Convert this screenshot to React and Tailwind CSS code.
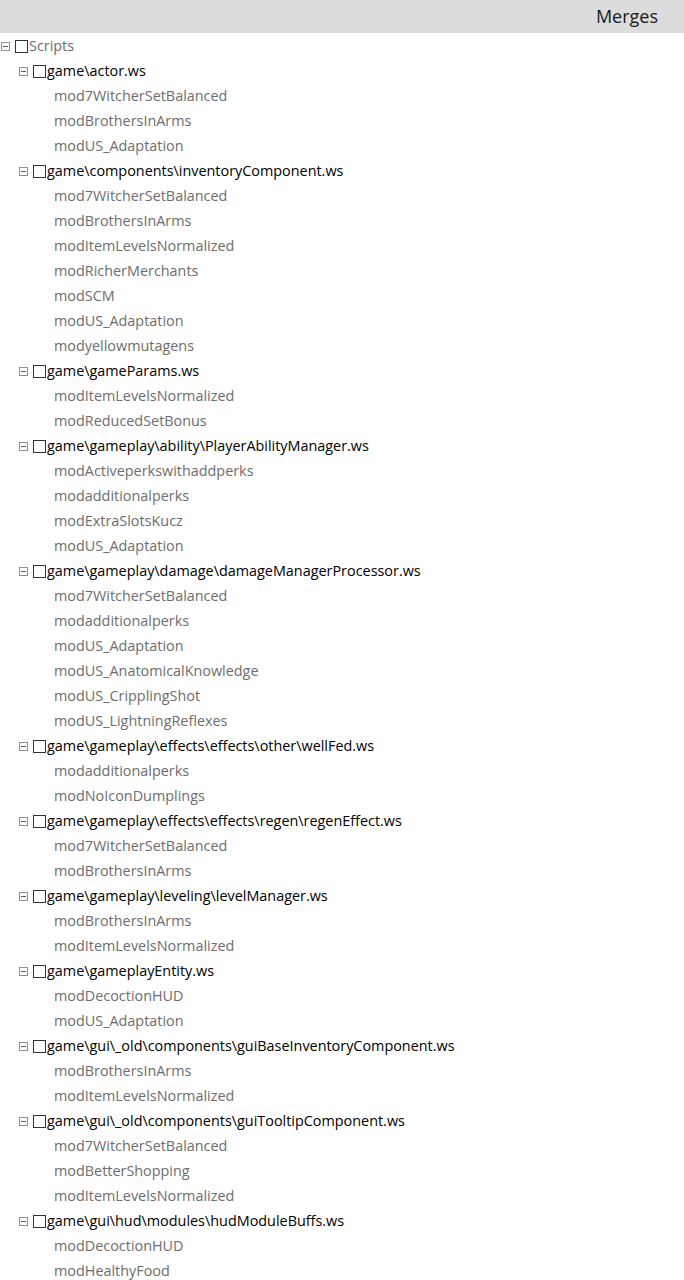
const tree = [
  { path: 'game\\actor.ws', mods: ['mod7WitcherSetBalanced', 'modBrothersInArms', 'modUS_Adaptation'] },
  {
    path: 'game\\components\\inventoryComponent.ws',
    mods: ['mod7WitcherSetBalanced', 'modBrothersInArms', 'modItemLevelsNormalized', 'modRicherMerchants', 'modSCM', 'modUS_Adaptation', 'modyellowmutagens'],
  },
  { path: 'game\\gameParams.ws', mods: ['modItemLevelsNormalized', 'modReducedSetBonus'] },
  {
    path: 'game\\gameplay\\ability\\PlayerAbilityManager.ws',
    mods: ['modActiveperkswithaddperks', 'modadditionalperks', 'modExtraSlotsKucz', 'modUS_Adaptation'],
  },
  {
    path: 'game\\gameplay\\damage\\damageManagerProcessor.ws',
    mods: ['mod7WitcherSetBalanced', 'modadditionalperks', 'modUS_Adaptation', 'modUS_AnatomicalKnowledge', 'modUS_CripplingShot', 'modUS_LightningReflexes'],
  },
  { path: 'game\\gameplay\\effects\\effects\\other\\wellFed.ws', mods: ['modadditionalperks', 'modNoIconDumplings'] },
  { path: 'game\\gameplay\\effects\\effects\\regen\\regenEffect.ws', mods: ['mod7WitcherSetBalanced', 'modBrothersInArms'] },
  { path: 'game\\gameplay\\leveling\\levelManager.ws', mods: ['modBrothersInArms', 'modItemLevelsNormalized'] },
  { path: 'game\\gameplayEntity.ws', mods: ['modDecoctionHUD', 'modUS_Adaptation'] },
  { path: 'game\\gui\\_old\\components\\guiBaseInventoryComponent.ws', mods: ['modBrothersInArms', 'modItemLevelsNormalized'] },
  { path: 'game\\gui\\_old\\components\\guiTooltipComponent.ws', mods: ['mod7WitcherSetBalanced', 'modBetterShopping', 'modItemLevelsNormalized'] },
  { path: 'game\\gui\\hud\\modules\\hudModuleBuffs.ws', mods: ['modDecoctionHUD', 'modHealthyFood'] },
];

const Expander = () => (
  <span className="flex h-[9px] w-[9px] shrink-0 items-center justify-center border border-[#919191] bg-white">
    <span className="block h-px w-[5px] bg-[#5a5a5a]" />
  </span>
);

const Checkbox = () => <span className="ml-[5px] block h-[13px] w-[13px] shrink-0 border border-[#333] bg-white" />;

const NodeRow = ({ label, className }) => (
  <div className="flex h-[25px] items-center">
    <Expander />
    <Checkbox />
    <span className={`ml-[1px] whitespace-nowrap ${className}`}>{label}</span>
  </div>
);

const App = () => {
  return (
    <div className="h-[1280px] w-[684px] overflow-hidden bg-white" style={{ fontFamily: '"Open Sans", "Noto Sans", sans-serif' }}>
      <div className="flex h-[33px] items-center justify-end bg-[#dcdcdc] pr-[26px]">
        <span className="text-[18px] text-[#1a1a1a]">Merges</span>
      </div>
      <div className="pl-[1px] pt-[1px] text-[14.4px] leading-none">
        <NodeRow label="Scripts" className="text-[#6d6d6d]" />
        <div className="pl-[18px]">
          {tree.map((file) => (
            <div key={file.path}>
              <NodeRow label={file.path} className="text-black" />
              {file.mods.map((mod, i) => (
                <div key={`${file.path}-${i}`} className="flex h-[25px] items-center whitespace-nowrap pl-[35px] text-[#6d6d6d]">
                  {mod}
                </div>
              ))}
            </div>
          ))}
        </div>
      </div>
    </div>
  );
};

export default App;
